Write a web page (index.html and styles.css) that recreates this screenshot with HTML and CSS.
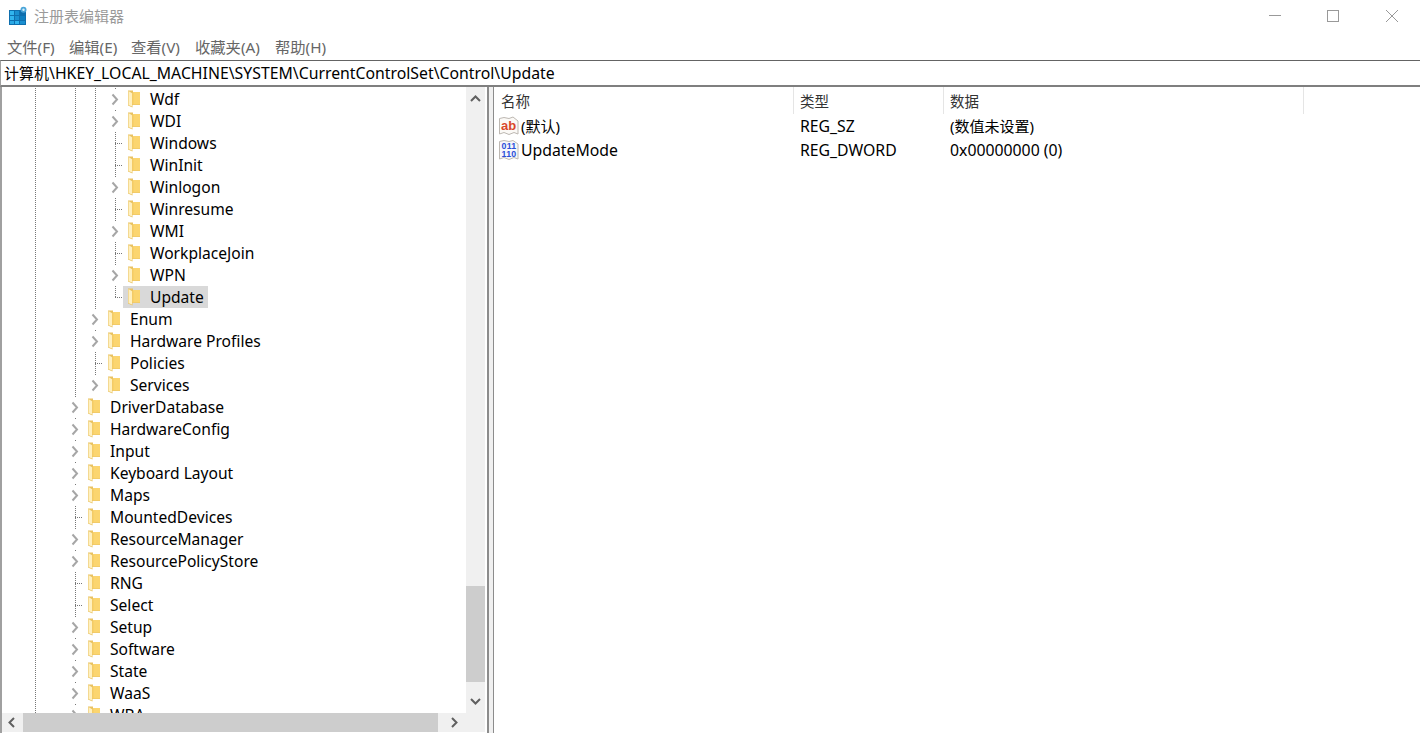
FILE: index.html
```html
<!DOCTYPE html>
<html lang="zh">
<head>
<meta charset="utf-8">
<title>注册表编辑器</title>
<link rel="stylesheet" href="styles.css">
</head>
<body>
<svg class="defs" width="0" height="0" aria-hidden="true">
  <symbol id="folder" viewBox="0 0 14 18">
    <path d="M1 .5 L6 .5 L6 2 L13 2 L13 15 L5.5 15 L5.5 17.5 L1 15.5 Z" fill="#e9c262"/>
    <path d="M6 2 L13 2 L13 14.5 L6 14.5 Z" fill="#fbd56f"/>
    <path d="M5 3 L6.5 3 L6.5 14.5 L5 14.5 Z" fill="#f4cb66"/>
    <path d="M1.5 1 L5 3.2 L5 16.6 L1.5 15 Z" fill="#fff0bf"/>
  </symbol>
  <symbol id="chev" viewBox="0 0 18 22">
    <path d="M7.5 6.5 L12 11.5 L7.5 16.5" fill="none" stroke="#a6a6a6" stroke-width="2"/>
  </symbol>
</svg>
<div class="window">
  <header class="titlebar">
    <svg class="appicon" viewBox="0 0 20 20" width="20" height="20">
      <rect x="1" y="4" width="17" height="15" fill="#0f6fae"/>
      <rect x="2" y="5" width="4" height="4" fill="#31b4ee"/>
      <rect x="7" y="5" width="4" height="4" fill="#1a8fd0"/>
      <rect x="2" y="10" width="4" height="4" fill="#31b4ee"/>
      <rect x="7" y="10" width="4" height="4" fill="#1a8fd0"/>
      <rect x="12" y="10" width="5" height="4" fill="#0f7fc0"/>
      <rect x="2" y="15" width="4" height="3" fill="#2aa8e4"/>
      <rect x="7" y="15" width="4" height="3" fill="#31b4ee"/>
      <rect x="12" y="15" width="5" height="3" fill="#1a8fd0"/>
      <circle cx="15.5" cy="3.8" r="3" fill="#4aa5d8"/>
      <circle cx="15.5" cy="3.8" r="1.2" fill="#d5eefa"/>
    </svg>
    <span class="title">注册表编辑器</span>
    <div class="winctl">
      <svg class="minbtn" viewBox="0 0 12 12" width="12" height="12"><path d="M0 5.5H12" stroke="#999" stroke-width="1"/></svg>
      <svg viewBox="0 0 12 12" width="12" height="12"><rect x=".5" y=".5" width="11" height="11" fill="none" stroke="#999"/></svg>
      <svg viewBox="0 0 12 12" width="12" height="12"><path d="M0 0L12 12M12 0L0 12" stroke="#999" stroke-width="1"/></svg>
    </div>
  </header>
  <nav class="menubar">
    <span class="m1">文件(F)</span><span class="m2">编辑(E)</span><span class="m3">查看(V)</span><span class="m4">收藏夹(A)</span><span class="m5">帮助(H)</span>
  </nav>
  <div class="address"><span class="addr-cjk">计算机</span>\HKEY_LOCAL_MACHINE\SYSTEM\CurrentControlSet\Control\Update</div>
  <main class="main">
    <section class="treepane">
      <div class="tree">
        <div class="row"><i class="s"></i><i class="g"></i><i class="s"></i><i class="g"></i><i class="g"></i><i class="t"><svg class="chev"><use href="#chev"/></svg></i><span class="label"><svg class="fold"><use href="#folder"/></svg>Wdf</span></div>
        <div class="row"><i class="s"></i><i class="g"></i><i class="s"></i><i class="g"></i><i class="g"></i><i class="t"><svg class="chev"><use href="#chev"/></svg></i><span class="label"><svg class="fold"><use href="#folder"/></svg>WDI</span></div>
        <div class="row"><i class="s"></i><i class="g"></i><i class="s"></i><i class="g"></i><i class="g"></i><i class="l"></i><span class="label"><svg class="fold"><use href="#folder"/></svg>Windows</span></div>
        <div class="row"><i class="s"></i><i class="g"></i><i class="s"></i><i class="g"></i><i class="g"></i><i class="l"></i><span class="label"><svg class="fold"><use href="#folder"/></svg>WinInit</span></div>
        <div class="row"><i class="s"></i><i class="g"></i><i class="s"></i><i class="g"></i><i class="g"></i><i class="t"><svg class="chev"><use href="#chev"/></svg></i><span class="label"><svg class="fold"><use href="#folder"/></svg>Winlogon</span></div>
        <div class="row"><i class="s"></i><i class="g"></i><i class="s"></i><i class="g"></i><i class="g"></i><i class="l"></i><span class="label"><svg class="fold"><use href="#folder"/></svg>Winresume</span></div>
        <div class="row"><i class="s"></i><i class="g"></i><i class="s"></i><i class="g"></i><i class="g"></i><i class="t"><svg class="chev"><use href="#chev"/></svg></i><span class="label"><svg class="fold"><use href="#folder"/></svg>WMI</span></div>
        <div class="row"><i class="s"></i><i class="g"></i><i class="s"></i><i class="g"></i><i class="g"></i><i class="l"></i><span class="label"><svg class="fold"><use href="#folder"/></svg>WorkplaceJoin</span></div>
        <div class="row"><i class="s"></i><i class="g"></i><i class="s"></i><i class="g"></i><i class="g"></i><i class="t"><svg class="chev"><use href="#chev"/></svg></i><span class="label"><svg class="fold"><use href="#folder"/></svg>WPN</span></div>
        <div class="row"><i class="s"></i><i class="g"></i><i class="s"></i><i class="g"></i><i class="g"></i><i class="e"></i><span class="label selected"><svg class="fold"><use href="#folder"/></svg>Update</span></div>
        <div class="row"><i class="s"></i><i class="g"></i><i class="s"></i><i class="g"></i><i class="t"><svg class="chev"><use href="#chev"/></svg></i><span class="label"><svg class="fold"><use href="#folder"/></svg>Enum</span></div>
        <div class="row"><i class="s"></i><i class="g"></i><i class="s"></i><i class="g"></i><i class="t"><svg class="chev"><use href="#chev"/></svg></i><span class="label"><svg class="fold"><use href="#folder"/></svg>Hardware Profiles</span></div>
        <div class="row"><i class="s"></i><i class="g"></i><i class="s"></i><i class="g"></i><i class="l"></i><span class="label"><svg class="fold"><use href="#folder"/></svg>Policies</span></div>
        <div class="row"><i class="s"></i><i class="g"></i><i class="s"></i><i class="g"></i><i class="t"><svg class="chev"><use href="#chev"/></svg></i><span class="label"><svg class="fold"><use href="#folder"/></svg>Services</span></div>
        <div class="row"><i class="s"></i><i class="g"></i><i class="s"></i><i class="t"><svg class="chev"><use href="#chev"/></svg></i><span class="label"><svg class="fold"><use href="#folder"/></svg>DriverDatabase</span></div>
        <div class="row"><i class="s"></i><i class="g"></i><i class="s"></i><i class="t"><svg class="chev"><use href="#chev"/></svg></i><span class="label"><svg class="fold"><use href="#folder"/></svg>HardwareConfig</span></div>
        <div class="row"><i class="s"></i><i class="g"></i><i class="s"></i><i class="t"><svg class="chev"><use href="#chev"/></svg></i><span class="label"><svg class="fold"><use href="#folder"/></svg>Input</span></div>
        <div class="row"><i class="s"></i><i class="g"></i><i class="s"></i><i class="t"><svg class="chev"><use href="#chev"/></svg></i><span class="label"><svg class="fold"><use href="#folder"/></svg>Keyboard Layout</span></div>
        <div class="row"><i class="s"></i><i class="g"></i><i class="s"></i><i class="t"><svg class="chev"><use href="#chev"/></svg></i><span class="label"><svg class="fold"><use href="#folder"/></svg>Maps</span></div>
        <div class="row"><i class="s"></i><i class="g"></i><i class="s"></i><i class="l"></i><span class="label"><svg class="fold"><use href="#folder"/></svg>MountedDevices</span></div>
        <div class="row"><i class="s"></i><i class="g"></i><i class="s"></i><i class="t"><svg class="chev"><use href="#chev"/></svg></i><span class="label"><svg class="fold"><use href="#folder"/></svg>ResourceManager</span></div>
        <div class="row"><i class="s"></i><i class="g"></i><i class="s"></i><i class="t"><svg class="chev"><use href="#chev"/></svg></i><span class="label"><svg class="fold"><use href="#folder"/></svg>ResourcePolicyStore</span></div>
        <div class="row"><i class="s"></i><i class="g"></i><i class="s"></i><i class="l"></i><span class="label"><svg class="fold"><use href="#folder"/></svg>RNG</span></div>
        <div class="row"><i class="s"></i><i class="g"></i><i class="s"></i><i class="l"></i><span class="label"><svg class="fold"><use href="#folder"/></svg>Select</span></div>
        <div class="row"><i class="s"></i><i class="g"></i><i class="s"></i><i class="t"><svg class="chev"><use href="#chev"/></svg></i><span class="label"><svg class="fold"><use href="#folder"/></svg>Setup</span></div>
        <div class="row"><i class="s"></i><i class="g"></i><i class="s"></i><i class="t"><svg class="chev"><use href="#chev"/></svg></i><span class="label"><svg class="fold"><use href="#folder"/></svg>Software</span></div>
        <div class="row"><i class="s"></i><i class="g"></i><i class="s"></i><i class="t"><svg class="chev"><use href="#chev"/></svg></i><span class="label"><svg class="fold"><use href="#folder"/></svg>State</span></div>
        <div class="row"><i class="s"></i><i class="g"></i><i class="s"></i><i class="t"><svg class="chev"><use href="#chev"/></svg></i><span class="label"><svg class="fold"><use href="#folder"/></svg>WaaS</span></div>
        <div class="row"><i class="s"></i><i class="g"></i><i class="s"></i><i class="t"><svg class="chev"><use href="#chev"/></svg></i><span class="label"><svg class="fold"><use href="#folder"/></svg>WBA</span></div>
      </div>
      <div class="vbar">
        <svg class="arrow" viewBox="0 0 19 17" width="19" height="17"><path d="M5 11L9.5 6.5L14 11" fill="none" stroke="#606060" stroke-width="2"/></svg>
        <div class="vtrack"><div class="vthumb"></div></div>
        <svg class="arrow" viewBox="0 0 19 17" width="19" height="17"><path d="M5 6L9.5 10.5L14 6" fill="none" stroke="#606060" stroke-width="2"/></svg>
      </div>
      <div class="hbar">
        <svg class="arrow" viewBox="0 0 21 19" width="21" height="19"><path d="M12 5L7.5 9.5L12 14" fill="none" stroke="#606060" stroke-width="2"/></svg>
        <div class="hthumb"></div>
        <svg class="arrow hnext" viewBox="0 0 28 19" width="28" height="19"><path d="M14 5L18.5 9.5L14 14" fill="none" stroke="#606060" stroke-width="2"/></svg>
      </div>
      <div class="corner"></div>
    </section>
    <div class="splitter"></div>
    <section class="listpane">
      <div class="lhead">
        <span class="col c1">名称</span><span class="col c2">类型</span><span class="col c3">数据</span>
      </div>
      <div class="lrow">
        <span class="cell c1">
          <svg class="regicon" viewBox="0 0 20 20" width="20" height="20">
            <path d="M.5 2.5L5 1.5L10 2.5L14 1L19 5V18L15 16.5L10 18.5L5 16.5L.5 18Z" fill="#fbf9f6" stroke="#bdb8b2"/>
            <text class="ab" x="2" y="14">ab</text>
          </svg><span class="cjkval">(默认)</span>
        </span>
        <span class="cell c2">REG_SZ</span><span class="cell c3 cjkval">(数值未设置)</span>
      </div>
      <div class="lrow">
        <span class="cell c1">
          <svg class="regicon" viewBox="0 0 20 20" width="20" height="20">
            <path d="M.5 1.5L5 .5L10 1.5L14 .5L19 4V19L15 17.5L10 19.5L5 17.5L.5 19Z" fill="#f6f7fb" stroke="#bdb8b2"/>
            <text class="bin" x="2.6" y="9">011</text>
            <text class="bin" x="2.6" y="16.5">110</text>
          </svg>UpdateMode
        </span>
        <span class="cell c2">REG_DWORD</span><span class="cell c3">0x00000000 (0)</span>
      </div>
    </section>
  </main>
</div>
</body>
</html>
```
FILE: styles.css
```css
* { box-sizing: border-box; }
html, body { margin: 0; height: 100%; overflow: hidden; background: #fff; }
body { font-family: "Noto Sans", "Noto Sans CJK SC", sans-serif; font-size: 15.6px; color: #000; }
.defs { position: absolute; }
.window { display: flex; flex-direction: column; height: 733px; }

.titlebar { display: flex; align-items: center; height: 32px; padding-left: 8px; flex: none; }
.appicon { flex: none; }
.title { margin-left: 6px; font-size: 15px; line-height: 20px; color: #9a9a9a; font-family: "Noto Sans CJK SC", sans-serif; }
.winctl { margin-left: auto; display: flex; gap: 47px; padding-right: 22px; align-items: center; }
.minbtn { margin-right: -1px; }

.menubar { display: flex; height: 27px; flex: none; align-items: center; padding-left: 7px; margin-bottom: 1px; color: #666; font-size: 15.3px; }
.m1 { width: 62px; } .m2 { width: 62px; } .m3 { width: 64px; } .m4 { width: 80px; }

.address { height: 27px; flex: none; border-top: 1px solid #646464; border-bottom: 2px solid #7f7f7f; border-left: 1px solid #a0a0a0; padding-left: 3px; line-height: 24px; font-size: 15.8px; white-space: nowrap; }
.addr-cjk { font-size: 15px; }

.main { flex: 1; display: flex; min-height: 0; }

.treepane { width: 487px; flex: none; display: grid; grid-template-columns: 1fr 19px; grid-template-rows: 1fr 19px; border-left: 2px solid #a0a0a0; padding-right: 2px; padding-bottom: 1px; min-height: 0; }
.tree { overflow: hidden; padding-top: 1px; min-height: 0; }
.row { display: flex; height: 22px; padding-left: 3px; }
.row i { display: block; flex: none; height: 22px; }
.s { width: 20px; }
.g { width: 20px; background: repeating-linear-gradient(to bottom, #777 0 1px, transparent 1px 2px) 10px 0 / 1px 100% no-repeat; }
.t { width: 18px; background: linear-gradient(#777, #777) 10px 0 / 1px 1px no-repeat; }
.l { width: 18px; background: repeating-linear-gradient(to bottom, #777 0 1px, transparent 1px 2px) 10px 0 / 1px 100% no-repeat, repeating-linear-gradient(to right, #777 0 1px, transparent 1px 2px) 10px 11px / 8px 1px no-repeat; }
.e { width: 18px; background: repeating-linear-gradient(to bottom, #777 0 1px, transparent 1px 2px) 10px 0 / 1px 12px no-repeat, repeating-linear-gradient(to right, #777 0 1px, transparent 1px 2px) 10px 11px / 8px 1px no-repeat; }
.chev { display: block; width: 18px; height: 22px; }
.label { display: flex; align-items: center; height: 22px; padding: 0 4px; white-space: nowrap; }
.fold { width: 14px; height: 18px; margin-right: 9px; flex: none; }
.selected { background: #d9d9d9; }

.vbar { display: flex; flex-direction: column; background: #f0f0f0; min-height: 0; padding: 3px 0; }
.arrow { display: block; flex: none; }
.vtrack { flex: 1; display: flex; flex-direction: column; justify-content: flex-end; padding-bottom: 11px; }
.vthumb { height: 96px; background: #cdcdcd; }
.hbar { display: flex; background: #f0f0f0; height: 19px; }
.hthumb { width: 415px; background: #cdcdcd; }
.corner { background: #f0f0f0; }

.splitter { width: 7px; flex: none; background: #f0f0f0; border-left: 2px solid #8c8c8c; border-right: 1px solid #8c8c8c; }

.listpane { flex: 1; min-width: 0; font-size: 15.8px; }
.lhead { display: flex; height: 27px; align-items: center; }
.col { height: 27px; line-height: 28px; padding-left: 6px; border-right: 1px solid #e5e5e5; font-family: "Noto Sans CJK SC", sans-serif; font-size: 14.5px; color: #333; }
.col.c1 { padding-left: 7px; }
.c1 { width: 300px; flex: none; }
.c2 { width: 150px; flex: none; }
.c3 { width: 360px; flex: none; }
.lrow { display: flex; height: 24px; align-items: center; }
.cell { display: flex; align-items: center; padding-left: 6px; white-space: nowrap; line-height: 20px; }
.cell.c1 { padding-left: 5px; }
.cjkval { font-size: 15px; line-height: 20px; }
.regicon { flex: none; margin-right: 2px; }
.ab { font: bold 13px "Liberation Sans", sans-serif; fill: #d9472b; }
.bin { font: bold 8.8px "Liberation Sans", sans-serif; fill: #2c50d8; letter-spacing: .2px; }
```
